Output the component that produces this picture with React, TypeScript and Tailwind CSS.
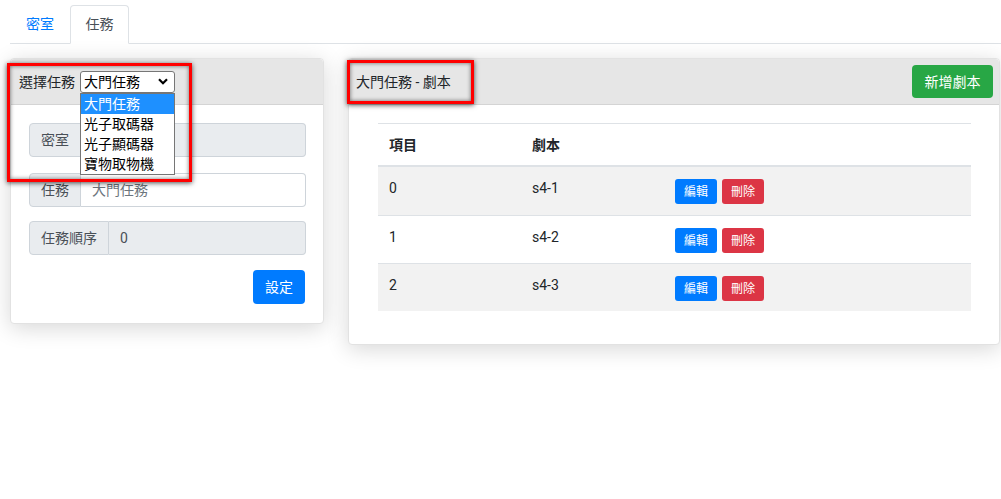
import React from "react";

const FONT = "font-['Roboto','Noto_Sans_CJK_TC',sans-serif]";

function InputGroup({ label, value, disabled, muted }: { label: string; value: string; disabled?: boolean; muted?: boolean }) {
  return (
    <div className="flex h-[34px] w-[277px]">
      <div className="flex items-center px-[11px] bg-[#e9ecef] border border-[#ced4da] rounded-l-[4px] text-[14px] leading-[20px] text-[#495057] whitespace-nowrap">
        {label}
      </div>
      <div
        className={`flex-1 flex items-center px-[11px] border border-l-0 border-[#ced4da] rounded-r-[4px] text-[14px] leading-[20px] ${
          disabled ? "bg-[#e9ecef]" : "bg-white"
        } ${muted ? "text-[#6c757d]" : "text-[#495057]"}`}
      >
        {value}
      </div>
    </div>
  );
}

function Row({ idx, name, striped, first }: { idx: string; name: string; striped: boolean; first?: boolean }) {
  return (
    <div
      className={`flex h-[48px] ${first ? "" : "border-t border-[#dee2e6]"} ${striped ? "bg-[#f2f2f2]" : "bg-white"}`}
    >
      <div className="w-[143px] pl-[11px] pt-[11px] text-[14px] leading-[21px] text-[#212529]">{idx}</div>
      <div className="w-[143px] pl-[11px] pt-[11px] text-[14px] leading-[21px] text-[#212529]">{name}</div>
      <div className="flex-1 pl-[11px] pt-[12px] flex gap-[5px] items-start">
        <button className="h-[25px] w-[42px] flex items-center justify-center rounded-[3px] bg-[#007bff] text-white text-[12px] leading-[16px]">
          編輯
        </button>
        <button className="h-[25px] w-[42px] flex items-center justify-center rounded-[3px] bg-[#dc3545] text-white text-[12px] leading-[16px]">
          刪除
        </button>
      </div>
    </div>
  );
}

export default function App() {
  return (
    <div className={`relative w-[1001px] h-[499px] overflow-hidden bg-white ${FONT} text-[#212529]`}>
      {/* Tabs */}
      <div className="flex ml-[10px] mt-[5px] border-b border-[#dee2e6]">
        <div className="h-[38px] w-[60px] flex items-center justify-center text-[14px] leading-[20px] text-[#007bff]">
          密室
        </div>
        <div className="-mb-px h-[39px] w-[59px] flex items-center justify-center pb-[1px] border border-[#dee2e6] border-b-white rounded-t-[4px] bg-white text-[14px] leading-[20px] text-[#495057]">
          任務
        </div>
      </div>

      {/* Cards */}
      <div className="flex items-start gap-[24px] ml-[10px] mt-[14px]">
        {/* Left card */}
        <div className="w-[314px] rounded-[4px] bg-white border border-[#e2e2e2] shadow-[0_4px_22px_rgba(0,0,0,0.16)]">
          <div className="h-[46px] flex items-center pl-[8px] bg-[#e6e6e6] border-b border-[#d4d4d4] rounded-t-[4px]">
            <span className="text-[14px] leading-[20px] text-[#212529]">選擇任務</span>
            <div className="relative ml-[5px]">
              <div className="w-[95px] h-[22px] flex items-center justify-between pl-[3px] pr-[6px] border border-[#767676] rounded-[3px] bg-white">
                <span className="text-[14px] leading-[18px] text-black">大門任務</span>
                <svg width="10" height="7" viewBox="0 0 10 7">
                  <path d="M1 1.2 L5 5.2 L9 1.2" fill="none" stroke="#000" strokeWidth="2.2" />
                </svg>
              </div>
              <div className="absolute left-0 top-[22px] w-[95px] z-10 bg-white border border-[#767676]">
                <div className="h-[20px] flex items-center pl-[3px] bg-[#1e90ff] text-white text-[14px] leading-[18px]">大門任務</div>
                <div className="h-[20px] flex items-center pl-[3px] text-black text-[14px] leading-[18px]">光子取碼器</div>
                <div className="h-[20px] flex items-center pl-[3px] text-black text-[14px] leading-[18px]">光子顯碼器</div>
                <div className="h-[20px] flex items-center pl-[3px] text-black text-[14px] leading-[18px]">寶物取物機</div>
              </div>
            </div>
          </div>
          <div className="px-[18px] pt-[18px] pb-[19px] flex flex-col">
            <InputGroup label="密室" value="" disabled />
            <div className="h-[16px]" />
            <InputGroup label="任務" value="大門任務" muted />
            <div className="h-[14px]" />
            <InputGroup label="任務順序" value="0" disabled />
            <div className="flex justify-end mt-[15px]">
              <button className="h-[34px] w-[52px] flex items-center justify-center rounded-[4px] bg-[#007bff] text-white text-[14px] leading-[20px]">
                設定
              </button>
            </div>
          </div>
        </div>

        {/* Right card */}
        <div className="w-[652px] rounded-[4px] bg-white border border-[#e2e2e2] shadow-[0_4px_22px_rgba(0,0,0,0.16)]">
          <div className="h-[46px] flex items-center justify-between pl-[7px] pr-[6px] bg-[#e6e6e6] border-b border-[#d4d4d4] rounded-t-[4px]">
            <span className="text-[14px] leading-[20px] text-[#212529]">大門任務 - 劇本</span>
            <button className="h-[33px] w-[81px] flex items-center justify-center rounded-[4px] bg-[#28a745] text-white text-[14px] leading-[20px]">
              新增劇本
            </button>
          </div>
          <div className="pl-[29px] pr-[28px] pt-[18px] pb-[33px]">
            <div className="flex h-[44px] border-t border-b-2 border-[#dee2e6]">
              <div className="w-[143px] pl-[11px] flex items-center text-[14px] leading-[20px] font-bold text-[#212529]">項目</div>
              <div className="w-[143px] pl-[11px] flex items-center text-[14px] leading-[20px] font-bold text-[#212529]">劇本</div>
              <div className="flex-1" />
            </div>
            <Row idx="0" name="s4-1" striped first />
            <Row idx="1" name="s4-2" striped={false} />
            <Row idx="2" name="s4-3" striped />
          </div>
        </div>
      </div>

      {/* Red annotation boxes */}
      <div className="absolute left-[7px] top-[63px] w-[185px] h-[119px] border-[3px] border-[#ff0000] shadow-[0_1px_5px_rgba(0,0,0,0.7),inset_0_0_4px_rgba(0,0,0,0.55)] pointer-events-none z-20" />
      <div className="absolute left-[347px] top-[60px] w-[127px] h-[44px] border-[3px] border-[#ff0000] shadow-[0_1px_5px_rgba(0,0,0,0.7),inset_0_0_4px_rgba(0,0,0,0.55)] pointer-events-none z-20" />
    </div>
  );
}
